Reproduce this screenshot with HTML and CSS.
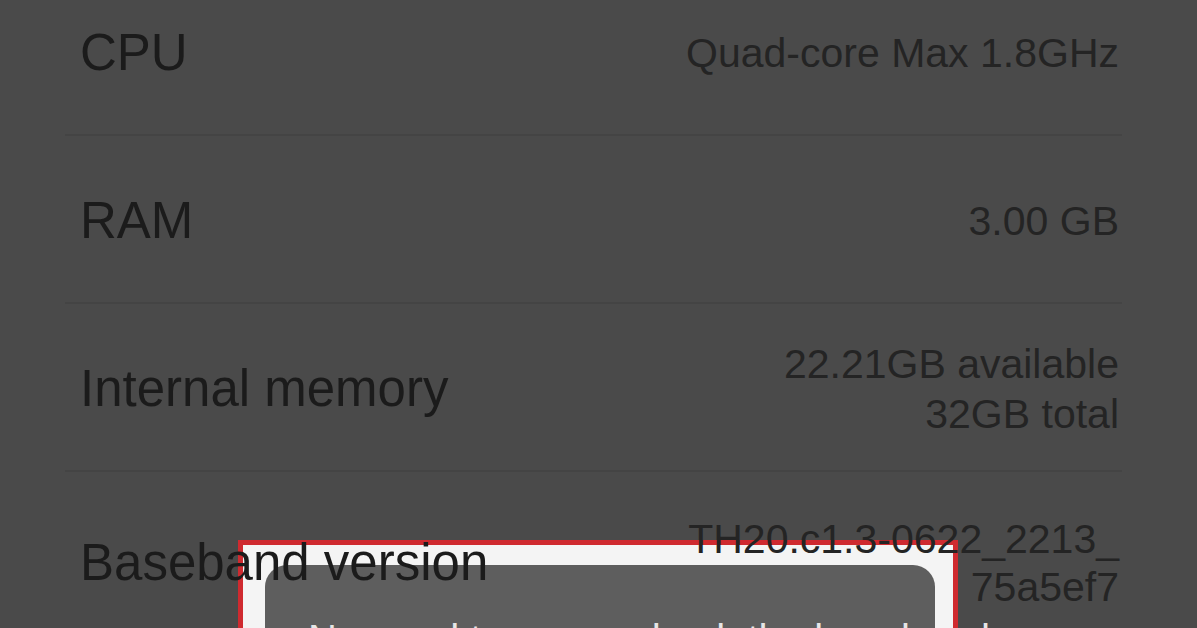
FILE: index.html
```html
<!DOCTYPE html>
<html lang="en">
<head>
<meta charset="utf-8">
<title>About phone</title>
<link rel="stylesheet" href="styles.css">
</head>
<body>
<div class="screen">
  <div class="list">
    <div class="row">
      <div class="label">CPU</div>
      <div class="value">Quad-core Max 1.8GHz</div>
    </div>
    <div class="row">
      <div class="label">RAM</div>
      <div class="value">3.00 GB</div>
    </div>
    <div class="row">
      <div class="label">Internal memory</div>
      <div class="value"><span>22.21GB available</span><span>32GB total</span></div>
    </div>
    <div class="row row-last">
      <div class="label">Baseband version</div>
      <div class="value value-tight"><span>TH20.c1.3-0622_2213_</span><span>75a5ef7</span></div>
    </div>
  </div>
  <div class="highlight">
    <div class="dialog">
      <p class="dialog-text">No need to worry, check the baseband</p>
    </div>
  </div>
</div>
</body>
</html>
```

FILE: styles.css
```css
* { box-sizing: border-box; }
html, body {
  margin: 0;
  padding: 0;
  background: #4a4a4a;
}
.screen {
  position: relative;
  width: 1197px;
  height: 628px;
  overflow: hidden;
  background: #4a4a4a;
  font-family: "Liberation Sans", Arial, sans-serif;
}
.list {
  position: relative;
  z-index: 2;
  margin-top: -32px;
}
.row {
  display: flex;
  justify-content: space-between;
  align-items: center;
  margin: 0 75px 0 65px;
  padding: 35px 3px 31px 15px;
  border-bottom: 2px solid #444444;
}
.row-last {
  padding-top: 41px;
  border-bottom: none;
}
.label {
  font-size: 51px;
  line-height: 100px;
  color: #1b1b1b;
  white-space: nowrap;
}
.value {
  display: flex;
  flex-direction: column;
  align-items: flex-end;
  font-size: 41px;
  line-height: 50px;
  color: #242424;
  white-space: nowrap;
}
.value-tight { line-height: 48px; }
.highlight {
  position: absolute;
  z-index: 1;
  left: 238px;
  top: 540px;
  width: 720px;
  height: 140px;
  border: 5px solid #cf2a2f;
  background: #f4f4f4;
  padding: 20px 18px 0 22px;
}
.dialog {
  height: 100%;
  background: #5e5e5e;
  border-radius: 22px 22px 0 0;
  padding: 50px 0 0 43px;
}
.dialog-text {
  margin: 0;
  font-size: 40px;
  line-height: 48px;
  color: #e6e6e6;
  white-space: nowrap;
}
```
